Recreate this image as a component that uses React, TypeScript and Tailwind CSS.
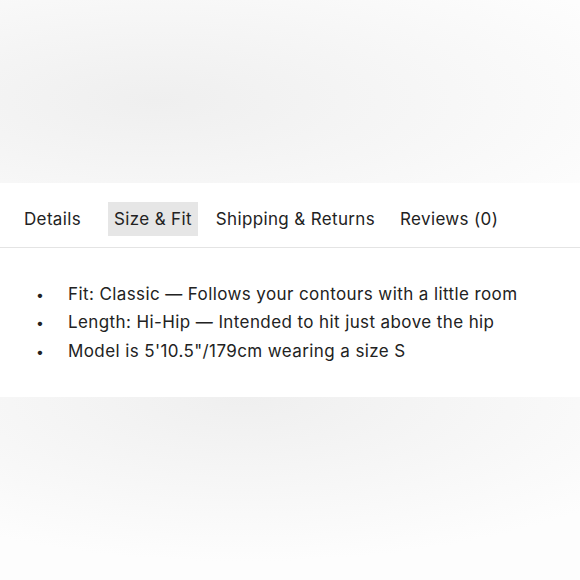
import React from "react";

const tabs = ["Details", "Size & Fit", "Shipping & Returns", "Reviews (0)"];
const items = [
  "Fit: Classic — Follows your contours with a little room",
  "Length: Hi-Hip — Intended to hit just above the hip",
  "Model is 5'10.5\"/179cm wearing a size S",
];

export default function App() {
  return (
    <div className="w-[580px] h-[580px] flex flex-col bg-white text-[#222] overflow-hidden" style={{ fontFamily: "Inter, 'Noto Sans', sans-serif" }}>
      <div className="h-[183px] shrink-0 bg-[radial-gradient(ellipse_100%_100%_at_27%_55%,#efefef_0%,#f6f6f6_45%,#fdfdfd_90%)]" />
      <div className="h-[214px] shrink-0 bg-white flex flex-col">
        <div className="flex items-center pl-[18px] pt-[19px] pb-[11px] border-b border-[#e4e4e4]">
          {tabs.map((t, i) => (
            <div
              key={t}
              className={`h-[34px] px-[6px] pt-[2px] flex items-center text-[17px] tracking-[0.35px] ${i === 0 ? "mr-[21px]" : i === 1 ? "mr-[12px]" : "mr-[13px]"} ${i === 1 ? "bg-[#e6e6e6]" : ""}`}
            >
              {t}
            </div>
          ))}
        </div>
        <ul className="pt-[32px] pl-[36px] flex flex-col">
          {items.map((t) => (
            <li key={t} className="flex items-center h-[28.5px] text-[17px] tracking-[0.4px]">
              <span className="w-[32px] text-[14px]">•</span>
              <span>{t}</span>
            </li>
          ))}
        </ul>
      </div>
      <div className="flex-1 bg-[radial-gradient(ellipse_90%_100%_at_42%_0%,#efefef_0%,#f6f6f6_45%,#fdfdfd_90%)]" />
    </div>
  );
}
